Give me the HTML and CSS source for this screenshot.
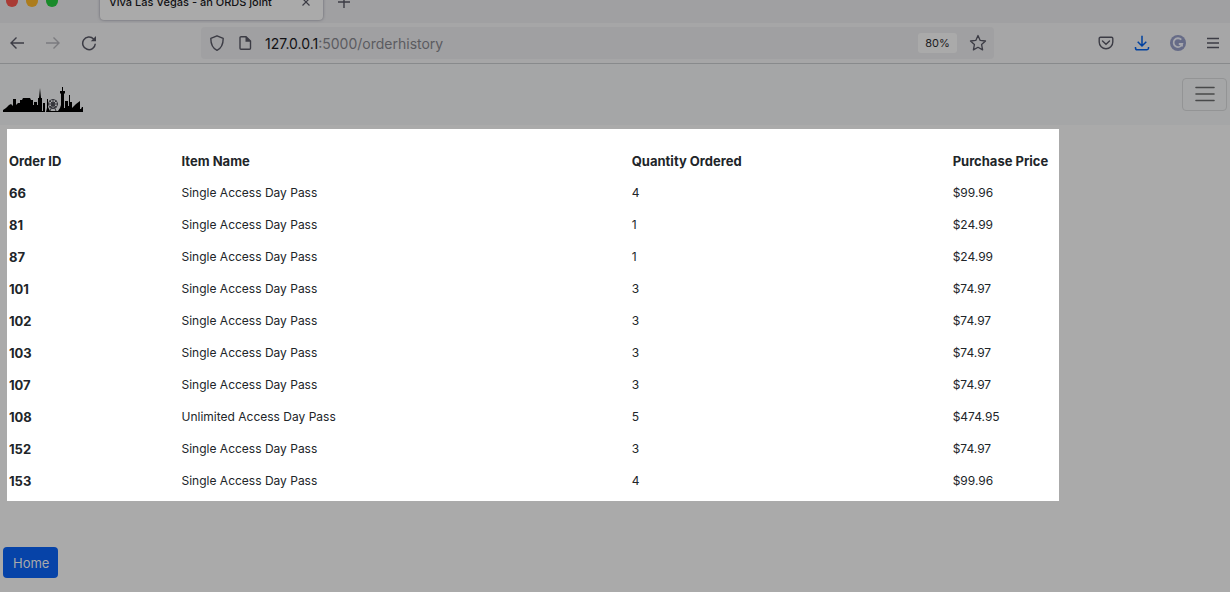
FILE: index.html
```html
<!DOCTYPE html>
<html lang="en">
<head>
<meta charset="utf-8">
<title>Viva Las Vegas - an ORDS joint</title>
<link rel="stylesheet" href="styles.css">
</head>
<body>
<header class="browser">
  <div class="tabstrip">
    <div class="lights"><span class="light light-red"></span><span class="light light-amber"></span><span class="light light-green"></span></div>
    <div class="tab">
      <span class="tab-title">Viva Las Vegas - an ORDS joint</span>
      <button class="icon-button" aria-label="Close tab"><svg width="10" height="10" viewBox="0 0 10 10"><path d="M1.500 1.500l7 7m0-7l-7 7" stroke-width="1.200"/></svg></button>
    </div>
    <button class="icon-button new-tab" aria-label="New tab"><svg width="14" height="14" viewBox="0 0 14 14"><path d="M7 1v12M1 7h12" stroke-width="1.400"/></svg></button>
  </div>
  <div class="toolbar">
    <nav class="history">
      <button class="icon-button" aria-label="Back"><svg width="16" height="16" viewBox="0 0 16 16"><path d="M15 8H2M7.500 2.500L2 8l5.500 5.500" stroke-width="1.400"/></svg></button>
      <button class="icon-button faded" aria-label="Forward"><svg width="16" height="16" viewBox="0 0 16 16"><path d="M1 8h13M8.500 2.500L14 8l-5.500 5.500" stroke-width="1.400"/></svg></button>
      <button class="icon-button" aria-label="Reload"><svg width="16" height="16" viewBox="0 0 16 16"><path d="M12.600 4A6.300 6.300 0 1 0 14.300 8.800" stroke-width="1.500"/><path class="solid" d="M15 1v5.200H9.800z"/></svg></button>
    </nav>
    <div class="address">
      <svg width="16" height="16" viewBox="0 0 16 16"><path d="M8 .8L14.200 3.400C14.200 9 12.200 13.200 8 15.300C3.800 13.200 1.800 9 1.800 3.400z" stroke-width="1.400" stroke-linejoin="round"/></svg>
      <svg width="16" height="16" viewBox="0 0 16 16"><path d="M9 1.700H4a1 1 0 0 0-1 1v10.600a1 1 0 0 0 1 1h8.500a1 1 0 0 0 1-1V6z" stroke-width="1.400"/><path class="solid" d="M8.500 1.200L14 6.700H8.500z"/></svg>
      <span class="url"><b>127.0.0.1</b>:5000/orderhistory</span>
      <button class="zoom">80%</button>
      <button class="icon-button" aria-label="Bookmark"><svg width="18" height="18" viewBox="0 0 18 18"><path d="M9 1.500l2.200 4.900 5.300.6-3.900 3.600 1 5.300L9 13.300l-4.600 2.600 1-5.300L1.500 7l5.300-.6z" stroke-width="1.300" stroke-linejoin="round"/></svg></button>
    </div>
    <div class="tools">
      <button class="icon-button" aria-label="Pocket"><svg width="16" height="16" viewBox="0 0 16 16"><path d="M2.500 2.200h11a1.300 1.300 0 0 1 1.300 1.300V7a6.800 6.800 0 0 1-13.600 0V3.500a1.300 1.300 0 0 1 1.300-1.300zM4.500 6L8 9.300 11.500 6" stroke-width="1.400" stroke-linecap="round"/></svg></button>
      <button class="icon-button download" aria-label="Downloads"><svg width="16" height="16" viewBox="0 0 16 16"><path d="M8 .8v10M3.700 6.800L8 11l4.300-4.200M1.500 12v1a1.800 1.800 0 0 0 1.800 1.800h9.400a1.800 1.800 0 0 0 1.800-1.800v-1" stroke-width="1.500"/></svg></button>
      <button class="icon-button" aria-label="Grammarly"><svg width="16" height="16" viewBox="0 0 16 16"><circle class="badge" cx="8" cy="8" r="8"/><path class="badge-mark" d="M11.300 4.700A4.400 4.400 0 1 0 12.200 9H8.800M12 8.500v3" stroke-width="1.800"/></svg></button>
      <button class="icon-button" aria-label="Menu"><svg width="14" height="14" viewBox="0 0 14 14"><path d="M1 2.500h12M1 7h12M1 11.500h12" stroke-width="1.300"/></svg></button>
    </div>
  </div>
</header>
<div class="navbar">
  <a href="#" aria-label="Viva Las Vegas"><svg class="skyline" width="80" height="26" viewBox="0 0 80 26">
    <path d="M0 26v-2l3-2 3-3 2-1 2 2V13h3v6l2-2h2v-3h2l1-2h7l1 2h2v5h1v-3h3v3h1v-7h1l1-10 1 10h1v13h1v-8h2v9h1l1-4V13h1v8l2 4h8l2-3 1-3V8l-1-1V5h2V1h1v4h2v2l-1 1v14h1v-7h3v5h1V9h1v7h2v6l4-4 4-3v8h1l1-2h3l1 2-1 1v2z"/>
    <circle class="wheel-back" cx="50" cy="18" r="5"/><g class="wheel"><circle cx="50" cy="18" r="4.500"/><circle cx="50" cy="18" r="1.500"/><path d="M50 13v10M45 18h10M46.500 14.500l7 7M53.500 14.500l-7 7M50 18l-3 7M50 18l3 7"/></g>
  </svg></a>
  <button class="toggler" aria-label="Toggle navigation"><svg width="24" height="24" viewBox="0 0 24 24"><path d="M3 4.500h18M3 11h18M3 17.500h18" stroke-width="1.600" stroke-linecap="round"/></svg></button>
</div>
<main>
  <section class="orders">
    <table>
      <thead><tr><th class="col-id" scope="col">Order ID</th><th class="col-name" scope="col">Item Name</th><th class="col-quantity" scope="col">Quantity Ordered</th><th scope="col">Purchase Price</th></tr></thead>
      <tbody>
        <tr><th scope="row">66</th><td>Single Access Day Pass</td><td>4</td><td>$99.96</td></tr>
        <tr><th scope="row">81</th><td>Single Access Day Pass</td><td>1</td><td>$24.99</td></tr>
        <tr><th scope="row">87</th><td>Single Access Day Pass</td><td>1</td><td>$24.99</td></tr>
        <tr><th scope="row">101</th><td>Single Access Day Pass</td><td>3</td><td>$74.97</td></tr>
        <tr><th scope="row">102</th><td>Single Access Day Pass</td><td>3</td><td>$74.97</td></tr>
        <tr><th scope="row">103</th><td>Single Access Day Pass</td><td>3</td><td>$74.97</td></tr>
        <tr><th scope="row">107</th><td>Single Access Day Pass</td><td>3</td><td>$74.97</td></tr>
        <tr><th scope="row">108</th><td>Unlimited Access Day Pass</td><td>5</td><td>$474.95</td></tr>
        <tr><th scope="row">152</th><td>Single Access Day Pass</td><td>3</td><td>$74.97</td></tr>
        <tr><th scope="row">153</th><td>Single Access Day Pass</td><td>4</td><td>$99.96</td></tr>
      </tbody>
    </table>
  </section>
  <a class="home" href="#">Home</a>
</main>
</body>
</html>
```
FILE: styles.css
```css
* { box-sizing: border-box; }
body {
  margin: 0;
  background: #aaaaaa;
  color: #212529;
  font: 13px/20px Inter, "Liberation Sans", sans-serif;
}
button { font: inherit; color: inherit; margin: 0; }
svg { display: block; flex: none; fill: none; stroke: #3c3c45; }
.solid { fill: #3c3c45; stroke: none; }
.icon-button { display: flex; padding: 0; border: 0; background: none; }

.tabstrip {
  display: flex;
  align-items: flex-end;
  height: 23px;
  padding-bottom: 3px;
  background: #a0a0a2;
  overflow: hidden;
}
.lights { display: flex; gap: 8px; padding: 0 42px 13px 6px; }
.light { width: 12px; height: 12px; border-radius: 50%; }
.light-red { background: #a93b35; }
.light-amber { background: #ac7c1d; }
.light-green { background: #198a2a; }
.tab {
  display: flex;
  align-items: center;
  justify-content: space-between;
  width: 223px;
  height: 36px;
  padding: 0 12px 0 9px;
  border-radius: 4px;
  background: #aaaaaa;
  box-shadow: 0 0 3px #62626c;
  color: #111114;
  font-size: 11px;
  font-weight: 500;
}
.new-tab { margin: 0 0 11px 14px; }

.toolbar {
  display: flex;
  align-items: center;
  height: 41px;
  padding: 0 10px 0 9px;
  border-bottom: 1px solid #888a8c;
  background: #a6a6a7;
}
.history { display: flex; gap: 20px; width: 192px; }
.faded { opacity: .4; }
.address {
  display: flex;
  align-items: center;
  gap: 12px;
  flex: 1;
  height: 32px;
  margin-right: 104px;
  padding: 0 7px 0 8px;
  border-radius: 4px;
  background: #a0a0a2;
}
.url { flex: 1; padding-top: 2px; color: #5b5b60; font-size: 14px; }
.url b { color: #111114; font-weight: 400; }
.zoom {
  width: 39px;
  height: 20px;
  padding: 0;
  border: 0;
  border-radius: 3px;
  background: #aaaaaa;
  color: #1c1b22;
  font-size: 11px;
}
.tools { display: flex; align-items: center; gap: 20px; }
.download svg { stroke: #0041a0; }
.badge { fill: #666b87; stroke: none; }
.badge-mark { stroke: #a5a6ac; }

.navbar {
  display: flex;
  align-items: center;
  justify-content: space-between;
  height: 61px;
  padding: 0 3px;
  background: #a5a6a7;
}
.skyline { margin-top: 9px; fill: #000000; stroke: none; }
.wheel-back { fill: #a5a6a7; }
.wheel { fill: none; stroke: #34353a; stroke-width: 1; }
.toggler {
  display: grid;
  place-items: center;
  width: 45px;
  height: 33px;
  padding: 0;
  border: 1px solid #939495;
  border-radius: 4px;
  background: none;
}
.toggler svg { stroke: #48494a; }

.orders {
  margin: 4px 171px 0 7px;
  padding: 15px 0 5px;
  background: #ffffff;
}
table { width: 100%; border-collapse: collapse; table-layout: fixed; }
th, td { height: 32px; padding: 1px 2px 0; text-align: left; white-space: nowrap; }
th { font-weight: 700; }
td { font-size: 12px; }
.col-id { width: 16.4%; }
.col-name { width: 42.8%; }
.col-quantity { width: 30.5%; }
.home {
  display: inline-block;
  margin: 46px 3px 0;
  padding: 6px 9px 5px 10px;
  border-radius: 4px;
  background: #0643a8;
  color: #aaaaaa;
  text-decoration: none;
}
```
